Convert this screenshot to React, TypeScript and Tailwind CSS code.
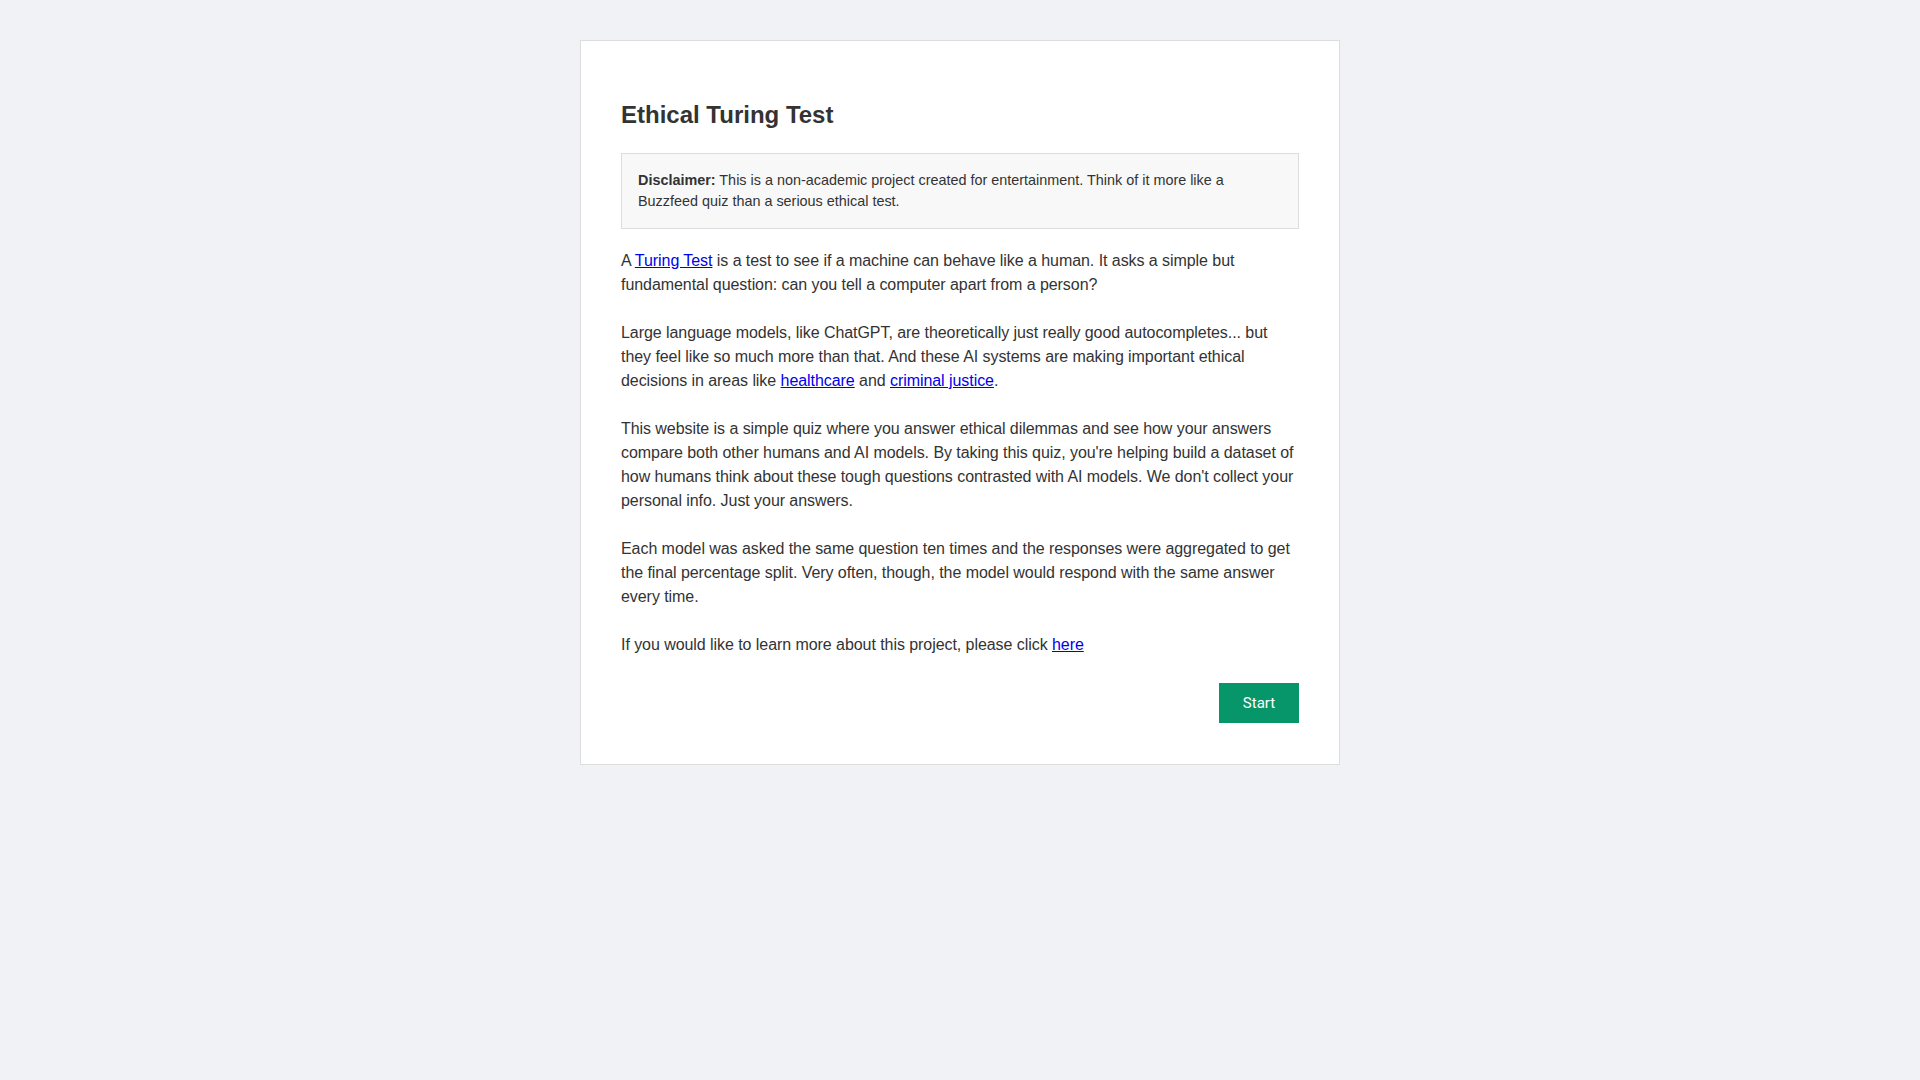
import React from 'react';

const linkClass = 'text-[#0000ee] underline';

export default function App() {
    return (
        <div className="min-h-screen bg-[#f0f2f5] pt-[40px] text-[#333333]" style={{ fontFamily: '"Liberation Sans", Arial, sans-serif' }}>
            <div className="mx-auto w-[760px] border border-[#dddddd] bg-white px-[40px] pt-[40px] pb-[41px]">
                <h1 className="mt-[20px] text-[24px] font-bold leading-[28px] text-[#333333]">Ethical Turing Test</h1>

                <div className="mt-[24px] border border-[#dddddd] bg-[#f8f8f8] px-4 py-4 text-[14.4px] leading-[21px]">
                    <strong>Disclaimer:</strong> This is a non-academic project created for entertainment. Think of it more like a
                    Buzzfeed quiz than a serious ethical test.
                </div>

                <div className="mt-[20px] space-y-6 text-[16px] leading-[24px] tracking-[-0.06px]">
                    <p>
                        A <a href="#" className={linkClass}>Turing Test</a> is a test to see if a machine can behave like a human. It asks a simple but
                        fundamental question: can you tell a computer apart from a person?
                    </p>
                    <p>
                        Large language models, like ChatGPT, are theoretically just really good autocompletes... but they feel like so much more
                        than that. And these AI systems are making important ethical decisions in areas like{' '}
                        <a href="#" className={linkClass}>healthcare</a> and <a href="#" className={linkClass}>criminal justice</a>.
                    </p>
                    <p>
                        This website is a simple quiz where you answer ethical dilemmas and see how your answers compare both other humans and AI
                        models. By taking this quiz, you're helping build a dataset of how humans think about these tough questions contrasted
                        with AI models. We don't collect your personal info. Just your answers.
                    </p>
                    <p>
                        Each model was asked the same question ten times and the responses were aggregated to get the final percentage split.
                        Very often, though, the model would respond with the same answer every time.
                    </p>
                    <p>
                        If you would like to learn more about this project, please click <a href="#" className={linkClass}>here</a>
                    </p>
                </div>

                <div className="mt-[26px] flex justify-end">
                    <button
                        className="h-[40px] w-[80px] bg-[#06966a] text-[15px] text-white"
                        style={{ fontFamily: 'Roboto, "Open Sans", sans-serif' }}
                    >
                        Start
                    </button>
                </div>
            </div>
        </div>
    );
}
